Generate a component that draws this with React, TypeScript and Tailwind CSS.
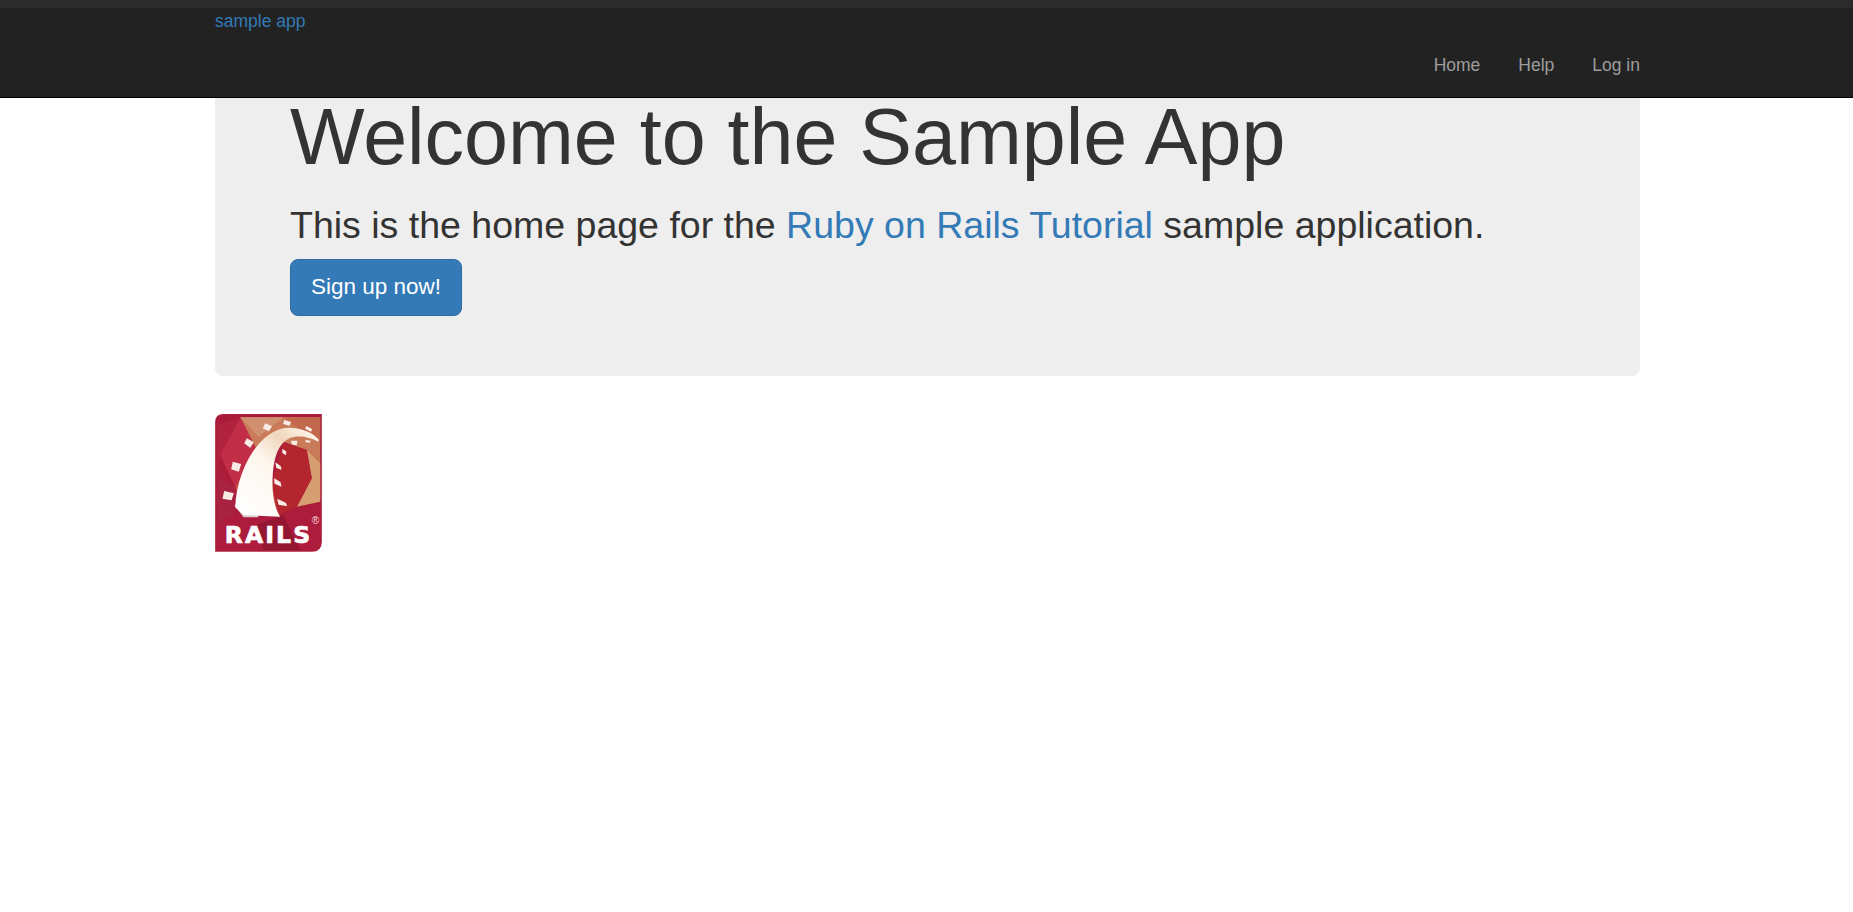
import React from 'react';

const RailsLogo: React.FC = () => (
  <svg width="109" height="138" viewBox="45 42 326 414" className="block" aria-label="Rails logo">
    <defs>
      <linearGradient id="rail" x1="130" y1="340" x2="340" y2="90" gradientUnits="userSpaceOnUse">
        <stop offset="0" stopColor="#ffffff" />
        <stop offset="0.5" stopColor="#fdf6ee" />
        <stop offset="0.75" stopColor="#f0d6bb" />
        <stop offset="1" stopColor="#fff8f0" />
      </linearGradient>
      <filter id="soft" x="-5%" y="-5%" width="110%" height="110%">
        <feGaussianBlur stdDeviation="1.4" />
      </filter>
    </defs>
    <g filter="url(#soft)">
      <path d="M70 42H365V425Q365 455 335 455H45V67Q45 42 70 42Z" fill="#ab1f3a" />
      <path d="M120 52H360V300L335 235L320 150L250 125L170 150Z" fill="#c97a58" />
      <path d="M250 52H360V130L300 90Z" fill="#c4674e" />
      <path d="M120 52L250 52L175 110Z" fill="#d09070" />
      <path d="M320 150L360 190V305L290 320L335 235Z" fill="#d69f72" />
      <path d="M250 130L320 150L335 235L290 320L235 345L215 250Z" fill="#b3262e" />
      <path d="M120 52L170 150L105 260L60 165Z" fill="#c22f46" />
      <path d="M52 75L120 52L60 165L52 230Z" fill="#b0233e" />
      <path d="M52 230L105 260L100 345L52 370Z" fill="#a82242" />
      <path d="M105 260L170 150L215 250L235 345H130Z" fill="#c8453f" />
      <path d="M50 372L100 345H290L360 305V425Q360 448 332 448H50Z" fill="#ad1c3c" />
      <path d="M170 375L250 345L300 450H190Z" fill="#951433" />
      <path d="M103 315L130 352H175L150 300Z" fill="#d7cfd0" />
      <path d="M105 322C110 205 180 85 265 83C300 83 335 95 355 118L356 126C325 110 295 105 268 115C235 130 222 170 218 220C214 280 222 320 240 350L130 345Z" fill="url(#rail)" />
      <g fill="#f8ece6">
        <path d="M195 70L216 79L206 94L188 85Z" />
        <path d="M252 60L273 66L268 77L249 72Z" />
        <path d="M318 78L337 88L332 95L315 86Z" />
        <path d="M140 115L161 127L150 143L132 130Z" />
        <path d="M98 185L123 192L116 215L93 208Z" />
        <path d="M72 273L101 280L94 301L67 296Z" />
        <path d="M247 146L259 155L257 166L246 158Z" />
        <path d="M226 187L242 199L244 210L228 203Z" />
        <path d="M222 235L241 246L244 260L223 251Z" />
        <path d="M231 296L257 308L261 319L235 314Z" />
        <path d="M272 122L292 122L290 135L276 134Z" />
        <path d="M316 120L332 122L328 128L316 127Z" />
      </g>
    </g>
    <text x="74" y="428" textLength="262" lengthAdjust="spacingAndGlyphs" letterSpacing="6" fill="#ffffff" stroke="#ffffff" strokeWidth="2" fontSize="68" fontWeight="700" fontFamily="'DejaVu Sans', sans-serif">RAILS</text>
    <text x="335" y="372" fill="#f5dcdc" fontSize="30" fontFamily="'Liberation Sans', sans-serif">®</text>
  </svg>
);

const App: React.FC = () => {
  return (
    <div className="min-h-[912px] bg-white font-['Liberation_Sans',Arial,sans-serif] text-[#333333]">
      <header className="h-[98px] bg-[#222222] border-b border-black">
        <div className="h-2 bg-[#2b2b2b]" />
        <div className="w-[1425px] ml-[215px]">
          <a href="#" className="block mt-[3px] text-[17.5px] leading-[20px] text-[#337ab7]">sample app</a>
          <nav className="flex justify-end gap-[38px] mt-[24px] text-[17.5px] leading-[20px] text-[#9d9d9d]">
            <a href="#">Home</a>
            <a href="#">Help</a>
            <a href="#">Log in</a>
          </nav>
        </div>
      </header>
      <main className="w-[1425px] ml-[215px]">
        <section className="h-[278px] bg-[#eeeeee] rounded-b-lg pl-[75px]">
          <h1 className="text-[79px] leading-[78px] font-normal">Welcome to the Sample App</h1>
          <p className="mt-[27px] text-[37.5px] leading-[44px] text-[#333333]">
            This is the home page for the <a href="#" className="text-[#337ab7]">Ruby on Rails Tutorial</a> sample application.
          </p>
          <a href="#" className="flex items-center justify-center mt-[12px] pb-[2px] w-[172px] h-[57px] bg-[#337ab7] border border-[#2e6da4] rounded-lg text-white text-[22.5px]">Sign up now!</a>
        </section>
        <div className="mt-[38px]">
          <RailsLogo />
        </div>
      </main>
    </div>
  );
};

export default App;
